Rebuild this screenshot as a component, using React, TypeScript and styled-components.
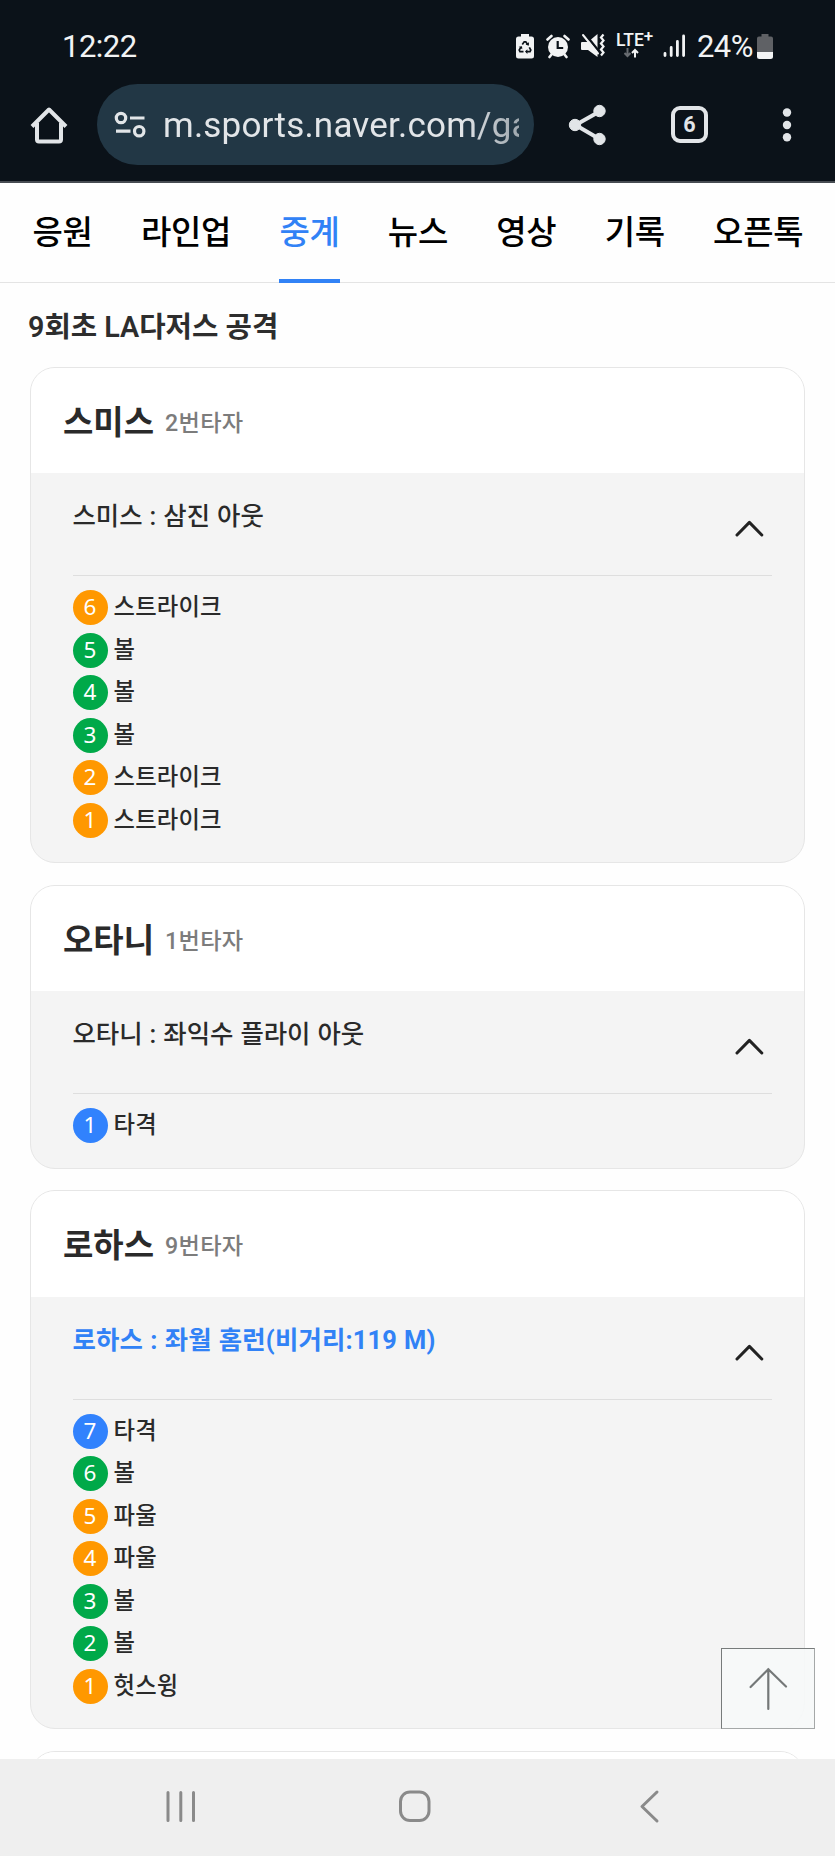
import React from "react";
import styled, { createGlobalStyle } from "styled-components";

const GlobalStyle = createGlobalStyle`
  * { box-sizing: border-box; }
  body {
    margin: 0;
    background: #fefefe;
    font-family: Roboto, "Noto Sans CJK KR", sans-serif;
    overflow: hidden;
  }
  h1, h2, p, ul, ol { margin: 0; padding: 0; list-style: none; }
  button { margin: 0; padding: 0; border: 0; background: none; font: inherit; color: inherit; }
  svg { display: block; flex: none; }
`;

const Screen = styled.div`
  display: flex;
  flex-direction: column;
  position: relative;
  width: 835px;
  height: 1856px;
  overflow: hidden;
`;

const Chrome = styled.header`
  flex: none;
  height: 183px;
  background: #0b1219;
  border-bottom: 2px solid #474c52;
  color: #e2e5e8;
`;

const StatusBar = styled.div`
  display: flex;
  align-items: center;
  height: 84px;
  padding: 8px 62px 0 62px;
  color: #f2f3f4;
`;

const Clock = styled.span`
  flex: 1;
  padding-top: 1px;
  font-size: 31px;
  line-height: 36px;
  letter-spacing: -0.5px;
`;

const StatusIcons = styled.div`
  display: flex;
  align-items: center;
`;

const Network = styled.div`
  display: flex;
  flex-direction: column;
  width: 41px;
  height: 26px;
  margin: 0 6px 0 11px;
  font-size: 17.5px;
  font-weight: 500;
  line-height: 15px;
  svg { margin-left: 8px; }
`;

const NetworkName = styled.div`
  display: flex;
  height: 15px;
  sup { font-size: 17px; line-height: 7px; }
`;

const Battery = styled.span`
  margin: 0 4px 0 11px;
  padding-top: 1px;
  font-size: 31px;
  line-height: 36px;
  letter-spacing: -0.5px;
`;

const Toolbar = styled.div`
  display: flex;
  align-items: center;
  height: 81px;
  padding-left: 30px;
`;

const AddressBar = styled.div`
  display: flex;
  align-items: center;
  width: 437px;
  height: 81px;
  margin: 0 33px 0 29px;
  padding-left: 17px;
  border-radius: 41px;
  background: #223745;
`;

const Url = styled.span`
  width: 356px;
  margin-left: 17px;
  padding-top: 3px;
  overflow: hidden;
  white-space: nowrap;
  font-size: 35px;
  line-height: 46px;
  letter-spacing: 0.2px;
  mask-image: linear-gradient(to right, #000 84%, rgba(0, 0, 0, 0.65));
`;

const TabCount = styled.div`
  display: flex;
  align-items: center;
  justify-content: center;
  width: 37px;
  height: 37px;
  margin: 0 74px 0 64px;
  border: 4px solid #e2e5e8;
  border-radius: 9px;
  font-size: 21.5px;
  font-weight: 700;
`;

const Page = styled.main`
  flex: 1;
  min-height: 0;
  overflow: hidden;
`;

const Tabs = styled.nav`
  display: flex;
  gap: 48.3px;
  height: 100px;
  padding-left: 32.5px;
  border-bottom: 1px solid #e4e4e4;
`;

const Tab = styled.button<{ $active?: boolean }>`
  position: relative;
  height: 100px;
  padding-bottom: 6px;
  font-family: "Noto Sans CJK KR", sans-serif;
  font-size: 33px;
  font-weight: 500;
  line-height: 94px;
  letter-spacing: -0.3px;
  color: ${(p) => (p.$active ? "#3182f6" : "#000")};
  &::after {
    content: "";
    display: ${(p) => (p.$active ? "block" : "none")};
    position: absolute;
    left: 0;
    right: 0;
    bottom: 0;
    height: 4px;
    background: #3182f6;
  }
`;

const InningTitle = styled.h1`
  height: 83.7px;
  padding: 22px 0 0 28px;
  font-size: 28.7px;
  line-height: 44px;
  font-weight: 600;
  color: #2d2d2d;
`;

const CardList = styled.div`
  display: flex;
  flex-direction: column;
  gap: 21.7px;
  padding: 0 30px;
`;

const Card = styled.section`
  flex: none;
  overflow: hidden;
  border: 1.5px solid #e6e6e6;
  border-radius: 25px;
  background: #f4f4f4;
`;

const CardHeader = styled.div`
  display: flex;
  align-items: center;
  height: 105.5px;
  padding: 5px 0 0 32px;
  background: #fff;
`;

const PlayerName = styled.h2`
  font-size: 33px;
  line-height: 48px;
  font-weight: 700;
  color: #2a2a2a;
`;

const BattingOrder = styled.span`
  margin-left: 11px;
  font-size: 23.2px;
  line-height: 36px;
  letter-spacing: 0.3px;
  font-weight: 500;
  color: #7c7c7c;
`;

const CardBody = styled.div`
  padding: 0 32px 20.5px 41.5px;
`;

const Result = styled.div`
  display: flex;
  justify-content: space-between;
  height: 103px;
  border-bottom: 1px solid #dedede;
  svg { margin: 47px 8px 0 0; }
`;

const ResultText = styled.p<{ $highlight?: boolean }>`
  padding-top: 25px;
  font-size: 25.4px;
  line-height: 36px;
  word-spacing: 0.7px;
  letter-spacing: ${(p) => (p.$highlight ? "0.15px" : "0")};
  font-weight: ${(p) => (p.$highlight ? 700 : 500)};
  color: ${(p) => (p.$highlight ? "#3182f6" : "#2a2a2a")};
`;

const PitchList = styled.ol`
  padding-top: 10px;
`;

const Pitch = styled.li`
  display: flex;
  align-items: center;
  height: 42.6px;
  font-size: 23.3px;
  line-height: 34px;
  letter-spacing: 0.2px;
  font-weight: 500;
  color: #2a2a2a;
`;

const pitchColors = { strike: "#ff9800", ball: "#00a949", hit: "#3182fd" };
type PitchKind = keyof typeof pitchColors;

const PitchNumber = styled.span<{ $kind: PitchKind }>`
  display: flex;
  justify-content: center;
  width: 35px;
  height: 35px;
  margin-right: 6px;
  border-radius: 50%;
  background: ${(p) => pitchColors[p.$kind]};
  font-family: "Noto Sans", sans-serif;
  font-weight: 400;
  font-size: 22.5px;
  line-height: 33px;
  color: #fff;
`;

const PitchLabel = styled.span`
  padding-bottom: 1px;
`;

const ScrollTop = styled.button`
  position: absolute;
  left: 721px;
  top: 1648px;
  width: 94px;
  height: 81px;
  display: flex;
  justify-content: center;
  padding-top: 18px;
  border: 1px solid #777b7b;
  border-right-color: #a5a8a8;
  border-bottom-color: #a5a8a8;
  background: rgba(246, 249, 248, 0.92);
`;

const SystemNav = styled.footer`
  flex: none;
  display: flex;
  align-items: flex-start;
  height: 97px;
  padding: 30px 0 0 165px;
  background: #efefef;
`;

const NavIcon = styled.svg<{ $gap?: number }>`
  margin-right: ${(p) => p.$gap ?? 0}px;
  fill: none;
  stroke: #8a8a8a;
  stroke-width: 3;
  stroke-linecap: round;
  stroke-linejoin: round;
`;

const Icon = styled.svg<{ $left?: number }>`
  margin-left: ${(p) => p.$left ?? 0}px;
`;

const Chevron = () => (
  <svg width="29" height="18" viewBox="0 0 29 18" fill="none" stroke="#222" strokeWidth="3" strokeLinecap="round" strokeLinejoin="round">
    <path d="M2 15 14.4 2.4 26.8 15" />
  </svg>
);

type PitchRow = [number, PitchKind, string];
interface AtBat {
  name: string;
  order: string;
  result: string;
  highlight?: boolean;
  pitches: PitchRow[];
}

const atBats: AtBat[] = [
  {
    name: "스미스",
    order: "2번타자",
    result: "스미스 : 삼진 아웃",
    pitches: [
      [6, "strike", "스트라이크"],
      [5, "ball", "볼"],
      [4, "ball", "볼"],
      [3, "ball", "볼"],
      [2, "strike", "스트라이크"],
      [1, "strike", "스트라이크"],
    ],
  },
  {
    name: "오타니",
    order: "1번타자",
    result: "오타니 : 좌익수 플라이 아웃",
    pitches: [[1, "hit", "타격"]],
  },
  {
    name: "로하스",
    order: "9번타자",
    result: "로하스 : 좌월 홈런(비거리:119 M)",
    highlight: true,
    pitches: [
      [7, "hit", "타격"],
      [6, "ball", "볼"],
      [5, "strike", "파울"],
      [4, "strike", "파울"],
      [3, "ball", "볼"],
      [2, "ball", "볼"],
      [1, "strike", "헛스윙"],
    ],
  },
];

const tabs = ["응원", "라인업", "중계", "뉴스", "영상", "기록", "오픈톡"];

export default function App() {
  return (
    <>
      <GlobalStyle />
      <Screen>
        <Chrome>
          <StatusBar>
            <Clock>12:22</Clock>
            <StatusIcons>
              <Icon width="18" height="25" viewBox="0 0 18 25">
                <path fill="#f2f3f4" d="M5 0h8v2.5h2.5A2.5 2.5 0 0 1 18 5v17a2.5 2.5 0 0 1-2.5 2.5h-13A2.5 2.5 0 0 1 0 22V5a2.5 2.5 0 0 1 2.5-2.5H5z" />
                <path fill="none" stroke="#0b1219" strokeWidth="1.7" d="M6.3 10.5 8.2 7.8h1.6l2 3M13.3 13.3l1.5 2.8-.8 1.6h-3.5M7.5 17.7H4l-.8-1.600 1.7-3" />
                <path fill="#0b1219" d="m13 8.200-.2 3.600-3.200-1.300zM11.400 15.300v4.600l-2.400-2.300zM2.700 12.800l3.300-.6.300 3z" />
              </Icon>
              <Icon $left={12} width="24" height="25" viewBox="0 0 24 25">
                <circle cx="12" cy="13" r="10" fill="#f2f3f4" />
                <path fill="none" stroke="#f2f3f4" strokeWidth="2.6" strokeLinecap="round" d="M1.5 5.5 5.5 2M22.5 5.5 18.5 2M5.5 20.5 3.5 23M18.5 20.5l2 2.5" />
                <path fill="none" stroke="#0b1219" strokeWidth="2.2" d="M11.7 7v7h5.500" />
              </Icon>
              <Icon $left={11} width="24" height="26" viewBox="0 0 24 26">
                <path fill="#f2f3f4" d="M1 9h6l9.500-8v23L7 17H1q-1 0-1-1v-6q0-1 1-1z" />
                <path stroke="#0b1219" strokeWidth="2.6" d="M3.500.5 18.500 19" />
                <path stroke="#f2f3f4" strokeWidth="2" strokeLinecap="round" d="M2 2 17 20.500" />
                <path fill="none" stroke="#f2f3f4" strokeWidth="2.2" d="m22.500 1.500-2.500 3 2.500 3-2.500 3 2.500 3-2.500 3 2.500 3-2.500 3" />
              </Icon>
              <Network>
                <NetworkName>
                  <span>LTE</span>
                  <sup>+</sup>
                </NetworkName>
                <svg width="16" height="10" viewBox="0 0 16 10" fill="none" strokeWidth="2">
                  <path stroke="#686c71" d="M3.500 0v8M.5 5l3 3 3-3" />
                  <path stroke="#f2f3f4" d="M11 9.500v-8M8 5l3-3 3 3" />
                </svg>
              </Network>
              <Icon width="23" height="24" viewBox="0 0 23 24" stroke="#f2f3f4" strokeWidth="2.8" strokeLinecap="round">
                <path d="M2 19.500v2M8.200 13.500v8M14.400 7.500v14M20.600 2v19.500" />
              </Icon>
              <Battery>24%</Battery>
              <Icon width="16" height="25" viewBox="0 0 16 25">
                <path fill="#5f6165" d="M4.500 0h7v2.500H14a2 2 0 0 1 2 2V18H0V4.500a2 2 0 0 1 2-2h2.500z" />
                <path fill="#f2f3f4" d="M0 18h16v4.500a2.500 2.500 0 0 1-2.500 2.500h-11A2.500 2.500 0 0 1 0 22.500z" />
              </Icon>
            </StatusIcons>
          </StatusBar>
          <Toolbar>
            <svg width="38" height="38" viewBox="0 0 38 38" fill="none" stroke="#e2e5e8" strokeWidth="4" strokeLinejoin="round">
              <path d="M2 20.500 19 3.500l17 17M7 17v16.500q0 2 2 2h20q2 0 2-2V17" />
            </svg>
            <AddressBar>
              <svg width="32" height="28" viewBox="0 0 32 28" fill="none" stroke="#e2e5e8" strokeWidth="3.2">
                <circle cx="7" cy="7" r="4.7" />
                <circle cx="25.2" cy="20.2" r="4.7" />
                <path d="M16 7h14.500M2 20.200h14.500" />
              </svg>
              <Url>m.sports.naver.com/game</Url>
            </AddressBar>
            <svg width="40" height="42" viewBox="0 0 40 42" fill="#e2e5e8" stroke="#e2e5e8">
              <path fill="none" strokeWidth="4" d="M32.500 7.500 8.500 21l24 14" />
              <circle cx="32.5" cy="7" r="5.7" />
              <circle cx="8" cy="21" r="5.7" />
              <circle cx="32.5" cy="35" r="5.7" />
            </svg>
            <TabCount>6</TabCount>
            <svg width="10" height="34" viewBox="0 0 10 34" fill="#e2e5e8">
              <circle cx="5" cy="4.5" r="4.2" />
              <circle cx="5" cy="17" r="4.2" />
              <circle cx="5" cy="29.3" r="4.2" />
            </svg>
          </Toolbar>
        </Chrome>
        <Page>
          <Tabs>
            {tabs.map((t) => (
              <Tab key={t} $active={t === "중계"}>
                {t}
              </Tab>
            ))}
          </Tabs>
          <InningTitle>9회초 LA다저스 공격</InningTitle>
          <CardList>
            {atBats.map((b) => (
              <Card key={b.name}>
                <CardHeader>
                  <PlayerName>{b.name}</PlayerName>
                  <BattingOrder>{b.order}</BattingOrder>
                </CardHeader>
                <CardBody>
                  <Result>
                    <ResultText $highlight={b.highlight}>{b.result}</ResultText>
                    <Chevron />
                  </Result>
                  <PitchList>
                    {b.pitches.map(([n, kind, label]) => (
                      <Pitch key={n}>
                        <PitchNumber $kind={kind}>{n}</PitchNumber>
                        <PitchLabel>{label}</PitchLabel>
                      </Pitch>
                    ))}
                  </PitchList>
                </CardBody>
              </Card>
            ))}
            <Card>
              <CardHeader />
            </Card>
          </CardList>
        </Page>
        <ScrollTop aria-label="맨 위로">
          <svg width="40" height="46" viewBox="0 0 40 46" fill="none" stroke="#747878" strokeWidth="2.2" strokeLinecap="round">
            <path d="M20.300 2v40M2.600 20 20.300 2.200 38 19.500" />
          </svg>
        </ScrollTop>
        <SystemNav>
          <NavIcon $gap={200} width="32" height="35" viewBox="0 0 32 35">
            <path d="M3 3.500v28M15.800 3.500v28M28.500 3.500v28" />
          </NavIcon>
          <NavIcon $gap={207} width="35" height="35" viewBox="0 0 35 35">
            <rect x="3.5" y="3" width="28.5" height="28.5" rx="9.5" />
          </NavIcon>
          <NavIcon width="22" height="36" viewBox="0 0 22 36">
            <path d="M18 3 3 17.500 18 32" />
          </NavIcon>
        </SystemNav>
      </Screen>
    </>
  );
}
